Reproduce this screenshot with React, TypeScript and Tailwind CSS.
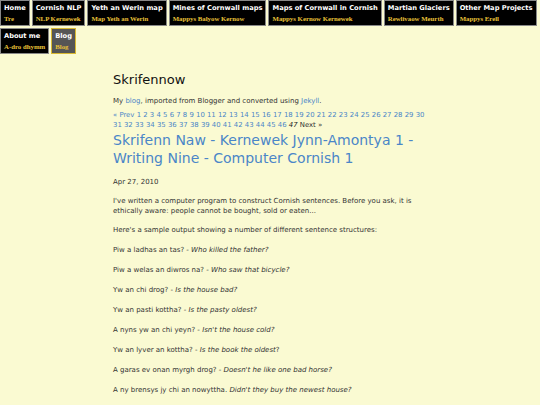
const nav = [
  { title: 'Home', sub: 'Tre' },
  { title: 'Cornish NLP', sub: 'NLP Kernewek' },
  { title: 'Yeth an Werin map', sub: 'Map Yeth an Werin' },
  { title: 'Mines of Cornwall maps', sub: 'Mappys Balyow Kernow' },
  { title: 'Maps of Cornwall in Cornish', sub: 'Mappys Kernow Kernewek' },
  { title: 'Martian Glaciers', sub: 'Rewlivaow Meurth' },
  { title: 'Other Map Projects', sub: 'Mappys Erell' },
  { title: 'About me', sub: 'A-dro dhymm' },
  { title: 'Blog', sub: 'Blog', active: true },
];

const examples: [string, string, string?][] = [
  ['Piw a ladhas an tas? - ', 'Who killed the father?'],
  ['Piw a welas an diwros na? - ', 'Who saw that bicycle?'],
  ['Yw an chi drog? - ', 'Is the house bad?'],
  ['Yw an pasti kottha? - ', 'Is the pasty oldest?'],
  ['A nyns yw an chi yeyn? - ', "Isn't the house cold?"],
  ['Yw an lyver an kottha? - ', 'Is the book the oldest', '?'],
  ['A garas ev onan myrgh drog? - ', "Doesn't he like one bad horse?"],
  ['A ny brensys jy chi an nowyttha. ', "Didn't they buy the newest house?"],
];

export default function App() {
  const pages = Array.from({ length: 46 }, (_, i) => i + 1);
  return (
    <div className="min-h-[405px] bg-[#fafad2] text-[#333] font-['DejaVu_Sans',sans-serif]">
      <nav className="flex flex-wrap gap-[2px]">
        {nav.map((n) => (
          <div
            key={n.title}
            className={`h-[26px] px-[3px] pt-[3px] border ${
              n.active ? 'bg-[#555] border-[#d8b830]' : 'bg-black border-[#888]'
            }`}
          >
            <div className="text-[6.7px] leading-[9px] font-bold text-white whitespace-nowrap">{n.title}</div>
            <div className="mt-[1px] text-[6.8px] leading-[10px] font-bold text-[#e8c038] font-['Liberation_Serif',serif] whitespace-nowrap">
              {n.sub}
            </div>
          </div>
        ))}
      </nav>
      <main className="w-[314px] mx-auto pt-[18px] text-[7px] leading-[10.5px]">
        <h1 className="text-[13px] leading-[16px] text-[#111]">Skrifennow</h1>
        <p className="mt-[8px]">
          My <a className="text-[#4a86c8]">blog</a>, imported from Blogger and converted using{' '}
          <a className="text-[#4a86c8]">Jekyll</a>.
        </p>
        <p className="mt-[3px] text-[6.9px] text-[#4a86c8]">
          « Prev{' '}
          {pages.map((p) => (
            <span key={p}>{p} </span>
          ))}
          <i className="text-[#222]">47</i> <span className="text-[#333]">Next »</span>
        </p>
        <h2 className="text-[14px] leading-[18px] text-[#4a86c8]">
          Skrifenn Naw - Kernewek Jynn-Amontya 1 - Writing Nine - Computer Cornish 1
        </h2>
        <p className="mt-[10px]">Apr 27, 2010</p>
        <p className="mt-[8.5px]">
          I've written a computer program to construct Cornish sentences. Before you ask, it is ethically aware: people
          cannot be bought, sold or eaten...
        </p>
        <p className="mt-[8px]">Here's a sample output showing a number of different sentence structures:</p>
        {examples.map(([a, b, c]) => (
          <p key={a} className="mt-[9.5px]">
            {a}
            <i>{b}</i>
            {c}
          </p>
        ))}
      </main>
    </div>
  );
}
